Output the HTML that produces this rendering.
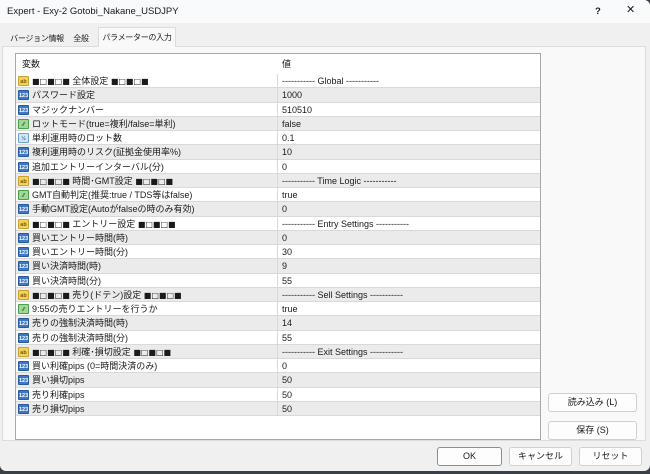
<!DOCTYPE html>
<html><head><meta charset="utf-8"><style>
*{margin:0;padding:0;box-sizing:border-box}
body{width:650px;height:474px;background:#3a4048;font-family:"Liberation Sans","Noto Sans CJK JP",sans-serif;font-size:9px;line-height:12px;color:#1a1a1a;position:relative;overflow:hidden}
.win{position:absolute;left:0;top:0;width:650px;height:471px;background:#f0f0f0;border-radius:0 6px 6px 6px;overflow:hidden}
.title{position:absolute;left:0;top:0;width:650px;height:23px;background:#f8fafb}
.title span{position:absolute;top:6px;font-size:9.5px}
.tab{position:absolute;top:30px;height:17px;font-size:8px;letter-spacing:-0.3px;padding-top:3px;text-align:center;white-space:nowrap}
.panel{position:absolute;left:2px;top:46px;width:644px;height:395px;background:#f9f9f9;border:1px solid #dcdcdc}
.tbl{position:absolute;left:15px;top:53px;width:526px;height:387px;background:#fff;border:1px solid #a8a8a8}
.row{position:absolute;left:0;width:524px;height:14.25px;border-bottom:1px solid #d9d9d9;white-space:nowrap}
.row.g{background:#ebebeb}
.row .n{position:absolute;left:16px;top:1px;line-height:12px;height:12px}
.row .v{position:absolute;left:266px;top:1px;line-height:12px;height:12px}
.sq{font-family:"DejaVu Sans",sans-serif;font-size:8px;font-weight:bold}
.row .sep{position:absolute;left:261px;top:0;width:1px;height:14px;background:#d9d9d9}
.ic{position:absolute;left:2px;top:2px;width:11px;height:10px;border-radius:1px;font-size:5.5px;font-weight:bold;text-align:center;line-height:10px}
.ab{background:#f1d25a;color:#7a5a00;border:1px solid #c9a430}
.n123{background:#3d78c8;color:#fff;border:1px solid #2a5aa0}
.tf{background:#9fd79a;border:1px solid #4aa04a;color:#1a6a1a}
.dbl{background:#cfe6f7;color:#2a70b0;border:1px solid #6aa6d8}
.btn{position:absolute;height:19px;background:#fdfdfd;border:1px solid #d0d0d0;border-radius:3px;text-align:center;font-size:9px;line-height:17px}
</style></head><body>
<div class="win">
<div class="title"><span style="left:7px">Expert - Exy-2 Gotobi_Nakane_USDJPY</span><span style="left:595px;font-weight:bold">?</span><span style="left:626px;font-size:11px;top:4px">✕</span></div>
<div class="panel"></div>
<div class="tab" style="left:8px;width:58px">バージョン情報</div>
<div class="tab" style="left:68px;width:26px">全般</div>
<div class="tab" style="left:98px;width:78px;top:27px;height:20px;background:#f9f9f9;border:1px solid #dcdcdc;border-bottom:none;padding-top:4px">パラメーターの入力</div>
<div class="tbl">
<div class="row" style="top:0;height:20px;border:none"><span class="n" style="left:6px;top:4px">変数</span><span class="v" style="top:4px">値</span></div>
<div id="rows"></div>
</div>
<div class="btn" style="left:548px;top:393px;width:89px">読み込み (L)</div>
<div class="btn" style="left:548px;top:421px;width:89px">保存 (S)</div>
<div class="btn" style="left:437px;top:447px;width:65px;border:1px solid #5a9ad0">OK</div>
<div class="btn" style="left:509px;top:447px;width:63px">キャンセル</div>
<div class="btn" style="left:579px;top:447px;width:63px">リセット</div>
</div>
<script>
var S='<span class="sq">■□■□■</span>';
var d=[["ab",S+" 全体設定 "+S,"----------- Global -----------"],["n","パスワード設定","1000"],["n","マジックナンバー","510510"],["t","ロットモード(true=複利/false=単利)","false"],["d","単利運用時のロット数","0.1"],["n","複利運用時のリスク(証拠金使用率%)","10"],["n","追加エントリーインターバル(分)","0"],["ab",S+" 時間･GMT設定 "+S,"----------- Time Logic -----------"],["t","GMT自動判定(推奨:true / TDS等はfalse)","true"],["n","手動GMT設定(Autoがfalseの時のみ有効)","0"],["ab",S+" エントリー設定 "+S,"----------- Entry Settings -----------"],["n","買いエントリー時間(時)","0"],["n","買いエントリー時間(分)","30"],["n","買い決済時間(時)","9"],["n","買い決済時間(分)","55"],["ab",S+" 売り(ドテン)設定 "+S,"----------- Sell Settings -----------"],["t","9:55の売りエントリーを行うか","true"],["n","売りの強制決済時間(時)","14"],["n","売りの強制決済時間(分)","55"],["ab",S+" 利確･損切設定 "+S,"----------- Exit Settings -----------"],["n","買い利確pips (0=時間決済のみ)","0"],["n","買い損切pips","50"],["n","売り利確pips","50"],["n","売り損切pips","50"]];
var h="";d.forEach(function(r,i){var ic=r[0]=="ab"?'<div class="ic ab">ab</div>':r[0]=="n"?'<div class="ic n123">123</div>':r[0]=="t"?'<div class="ic tf">⁄⁄</div>':'<div class="ic dbl">½</div>';
h+='<div class="row'+(i%2?' g':'')+'" style="top:'+(20+i*14.25)+'px">'+ic+'<span class="n">'+r[1]+'</span><div class="sep"></div><span class="v">'+r[2]+'</span></div>';});
document.getElementById("rows").innerHTML=h;
</script>
</body></html>
